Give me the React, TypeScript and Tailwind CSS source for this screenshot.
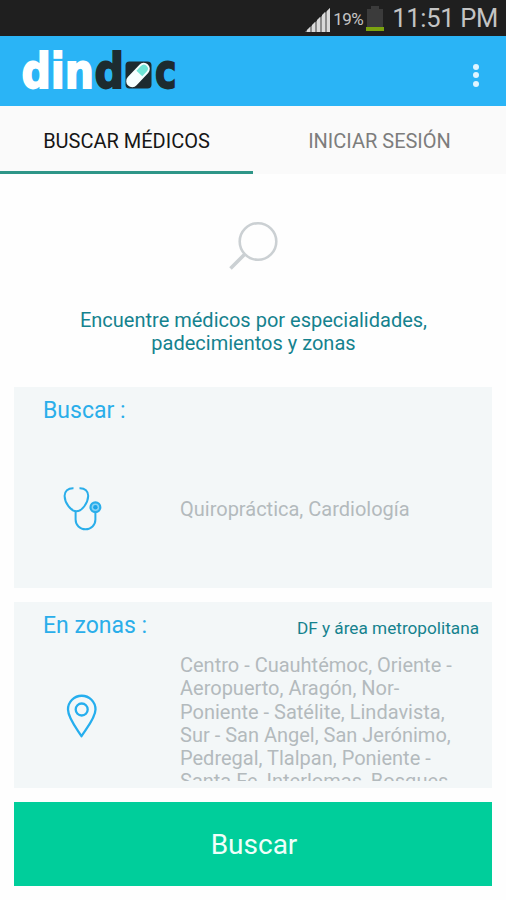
import React from 'react';
import { clsx } from 'clsx';

interface TabProps {
  label: string;
  active?: boolean;
}

const StatusBar: React.FC = () => (
  <div className="flex h-9 shrink-0 items-center justify-end bg-[#1f1f1f] pr-2 text-[#c4c4c4]">
    <svg width="25" height="24" viewBox="0 0 25 24" className="mr-[3px] mt-[3px]">
      <path d="M0 24 L25 0 V24 Z" fill="#8c8c8c" />
      <path d="M2 24v-2l3-3v5zM7 24v-7l3-3v10zM12 24V12l3-3v15zM17 24V7l3-3v20zM22 24V3l3-3v24z" fill="#dadada" />
    </svg>
    <span className="mr-[3px] mt-[2px] text-[17px] leading-none tracking-[-0.5px]">19%</span>
    <svg width="18" height="26" viewBox="0 0 18 26" className="mr-[8px] mt-[2px]">
      <path d="M5 0h8v3h4v18H1V3h4z" fill="#3b3b3b" />
      <path d="M0 21h18v4H0z" fill="#7ba30f" />
    </svg>
    <span className="mt-px text-[25.5px] leading-none tracking-[-0.3px]">11:51 PM</span>
  </div>
);

const Logo: React.FC = () => (
  <svg
    width="164"
    height="70"
    viewBox="0 -13 164 70"
    strokeWidth="1.8"
    strokeLinejoin="miter"
    className="font-['DejaVu_Sans',sans-serif] font-bold"
  >
    <text x="0.5" y="39" fontSize="47.5" textLength="72.5" lengthAdjust="spacingAndGlyphs" fill="#fff" stroke="#fff">din</text>
    <text x="73.5" y="39" fontSize="47.5" textLength="29.5" lengthAdjust="spacingAndGlyphs" fill="#1d2b2f" stroke="#1d2b2f">d</text>
    <rect x="104.5" y="12.5" width="26" height="27" rx="4" fill="#1d2b2f" />
    <g transform="rotate(43 117 26)">
      <rect x="111" y="11.5" width="12" height="29" rx="6" fill="#f4ffff" />
      <path d="M113 24V17.5a4 4 0 0 1 8 0V24z" fill="#6fe5d6" />
    </g>
    <text x="134" y="39" fontSize="47.5" textLength="21.5" lengthAdjust="spacingAndGlyphs" fill="#1d2b2f" stroke="#1d2b2f">c</text>
  </svg>
);

const Header: React.FC = () => (
  <header className="flex h-[70px] shrink-0 items-center justify-between bg-[#2ab4f6] pl-[21px] pr-[27px]">
    <Logo />
    <div className="mt-[8px] flex flex-col gap-[2.5px]">
      <span className="size-[6px] rounded-full bg-[#dff5ff]" />
      <span className="size-[6px] rounded-full bg-[#dff5ff]" />
      <span className="size-[6px] rounded-full bg-[#dff5ff]" />
    </div>
  </header>
);

const Tab: React.FC<TabProps> = ({ label, active = false }) => (
  <button
    className={clsx(
      'flex flex-1 items-center justify-center border-b-[3px] pt-[5px] text-[20px] leading-6',
      active ? 'border-[#2e9688] text-[#161616]' : 'border-transparent text-[#7d7d7d]'
    )}
  >
    {label}
  </button>
);

const SearchIcon: React.FC = () => (
  <svg width="50" height="50" viewBox="0 0 50 50" fill="none" stroke="#cbd0d3">
    <circle cx="30" cy="20.5" r="18.3" strokeWidth="2.6" />
    <path d="M16.5 33.5 2.5 47.5" strokeWidth="3.6" />
  </svg>
);

const StethoscopeIcon: React.FC = () => (
  <svg width="40" height="44" viewBox="0 0 40 44" fill="none" stroke="#2aaeea" strokeWidth="2">
    <path d="M10.5 1.2C5 1 1.5 4 1.6 9c.2 7 6 15.2 11.8 15.2S24.9 16 25.2 9C25.3 4 22 1 16.5 1.2" />
    <path d="M12.6 24.5v8c0 5.5 4.3 9.7 9.9 9.7s9.9-4.2 9.9-9.7V26" />
    <circle cx="32.4" cy="20.2" r="4.9" strokeWidth="2.2" fill="#8ad3f5" />
    <circle cx="32.4" cy="20.2" r="2.2" fill="#1ba4e8" stroke="none" />
  </svg>
);

const PinIcon: React.FC = () => (
  <svg width="32" height="44" viewBox="0 0 32 44" fill="none" stroke="#25aeee" strokeWidth="2.3" strokeLinejoin="round">
    <path d="M15.5 42.2C11 35 2 24 2 15.5a13.5 13.5 0 0 1 27.5 0C29.5 24 20 35 15.5 42.2z" />
    <circle cx="15.7" cy="15.5" r="6" />
  </svg>
);

export default function App() {
  return (
    <div className="flex h-[900px] w-[506px] flex-col overflow-hidden bg-[#fefefe] font-['Roboto','Noto_Sans',sans-serif]">
      <StatusBar />
      <Header />
      <nav className="flex h-[68px] shrink-0 bg-[#fafafa]">
        <Tab label="BUSCAR MÉDICOS" active />
        <Tab label="INICIAR SESIÓN" />
      </nav>

      <section className="flex h-[213px] shrink-0 flex-col items-center pt-[47px]">
        <SearchIcon />
        <p className="mt-[38px] pl-px text-center text-[20px] leading-[23px] text-[#15828e]">
          Encuentre médicos por especialidades,
          <br />
          padecimientos y zonas
        </p>
      </section>

      <main className="flex flex-col gap-[14px] px-[14px]">
        <section className="flex h-[201px] flex-col bg-[#f3f7f8] pl-[29px] pt-[10px]">
          <h2 className="text-[23px] leading-[27px] text-[#2aaeea]">Buscar :</h2>
          <div className="mt-[63px] flex items-center">
            <div className="w-[137px] pl-[20px]">
              <StethoscopeIcon />
            </div>
            <p className="text-[20px] leading-[23px] text-[#b3babd]">Quiropráctica, Cardiología</p>
          </div>
        </section>

        <section className="flex h-[186px] flex-col bg-[#f3f7f8] pl-[29px] pr-[13px] pt-[10px]">
          <div className="flex items-center justify-between">
            <h2 className="text-[23px] leading-[27px] text-[#2aaeea]">En zonas :</h2>
            <span className="mt-[5px] text-[17.2px] leading-5 text-[#15828e]">DF y área metropolitana</span>
          </div>
          <div className="mt-[15px] flex">
            <div className="w-[137px] shrink-0 pl-[23px] pt-[40px]">
              <PinIcon />
            </div>
            {/* the list is taller than its box, so the last line is cut */}
            <p className="h-[127px] w-[285px] overflow-hidden text-[20px] leading-[23.3px] text-[#b3babd]">
              Centro - Cuauhtémoc, Oriente -<br />
              Aeropuerto, Aragón, Nor-<br />
              Poniente - Satélite, Lindavista,<br />
              Sur - San Angel, San Jerónimo,<br />
              Pedregal, Tlalpan, Poniente -<br />
              Santa Fe, Interlomas, Bosques
            </p>
          </div>
        </section>

        <button className="h-[84px] bg-[#00ce9b] pl-[2px] pt-[2px] text-[28px] text-[#effffa]">Buscar</button>
      </main>
    </div>
  );
}
